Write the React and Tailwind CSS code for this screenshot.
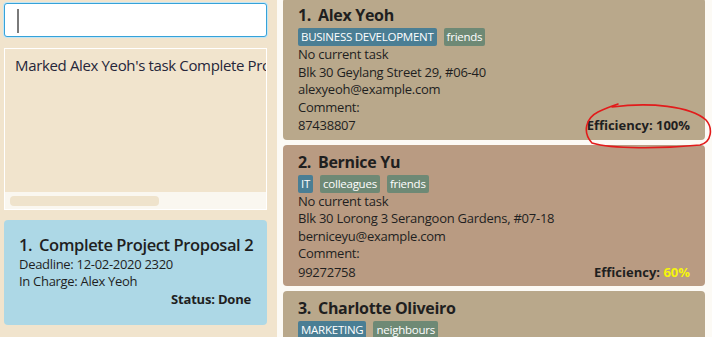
import React from "react";

const font = { fontFamily: '"Open Sans", "Noto Sans", sans-serif' };

function Tag({ children, kind }) {
  return (
    <span
      className={
        "inline-flex h-[18px] items-center rounded-[2px] px-[3px] text-[11.5px] leading-none tracking-[-0.25px] text-white " +
        (kind === "dept" ? "bg-[#4a7e94]" : "bg-[#6e8975]")
      }
    >
      {children}
    </span>
  );
}

function PersonCard({ idx, name, tags, address, email, phone, eff, effYellow, bg, extra }) {
  return (
    <div className={"shrink-0 rounded-[4px] pl-[15px] pr-[15px] pt-[6px] pb-[5px] text-[#1f1f1f] " + bg + " " + (extra || "")}>
      <div className="flex h-[22px] items-center whitespace-nowrap text-[16px] font-bold leading-[22px] tracking-[-0.3px]">
        <span className="w-[20px]">{idx}.</span>
        <span>{name}</span>
      </div>
      <div className="mt-[2px] flex gap-[7px] whitespace-nowrap">
        {tags.map((t) => (
          <Tag key={t.label} kind={t.kind}>
            {t.label}
          </Tag>
        ))}
      </div>
      <div className="whitespace-nowrap text-[13px] leading-[17.5px] tracking-[-0.25px]">
        <div>No current task</div>
        <div>{address}</div>
        <div>{email}</div>
        <div>Comment:</div>
        <div className="flex items-end justify-between">
          <span className="pt-[1px]">{phone}</span>
          <span className="pt-[1px] font-bold tracking-[0px]">
            Efficiency: <span className={effYellow ? "text-[#f5f50a]" : ""}>{eff}</span>
          </span>
        </div>
      </div>
    </div>
  );
}

export default function App() {
  return (
    <div className="relative flex h-[337px] w-[712px] overflow-hidden bg-[#fcfaf5]" style={font}>
      {/* Left panel */}
      <div className="flex w-[277px] shrink-0 flex-col bg-[#f1e4cd] pl-[4px] pr-[10px]">
        <div className="mt-[3px] h-[34px] rounded-[3px] border-[1.5px] border-[#36a2d8] bg-white p-[4px] shadow-[0_0_0_1px_#c4e6f5]">
          <div className="ml-[8px] mt-[1px] h-[24px] w-[2px] bg-[#7a7a7a]" />
        </div>
        <div className="mt-[11px] flex h-[162px] w-[263px] flex-col border border-white bg-[#f1e4cd]">
          <div className="flex-1 overflow-hidden whitespace-nowrap pl-[10px] pt-[6px] text-[15px] leading-[20px] tracking-[-0.35px] text-[#26263a]">
            Marked Alex Yeoh's task Complete Project Proposal 2 as Done
          </div>
          <div className="flex h-[17px] items-center bg-[#faf7f0] px-[5px]">
            <div className="h-[10px] w-[149px] rounded-[4px] bg-[#efe3cc]" />
          </div>
        </div>
        <div className="mt-[10px] h-[105px] w-[263px] rounded-[4px] bg-[#add8e6] pl-[15px] pr-[16px] pt-[14px] text-[#1f1f1f]">
          <div className="whitespace-nowrap text-[16.5px] font-semibold leading-[22px] tracking-[-0.4px]">
            <span className="inline-block w-[20px]">1.</span>Complete Project Proposal 2
          </div>
          <div className="whitespace-nowrap text-[13px] leading-[17px] tracking-[-0.3px]">Deadline: 12-02-2020 2320</div>
          <div className="whitespace-nowrap text-[13px] leading-[17px] tracking-[-0.3px]">In Charge: Alex Yeoh</div>
          <div className="mt-[1px] text-right text-[13px] font-bold leading-[17px] tracking-[-0.2px]">Status: Done</div>
        </div>
      </div>

      {/* Right panel */}
      <div className="flex flex-1 flex-col gap-[5px] pl-[6px] pr-[7px]">
        <PersonCard
          extra="-mt-[2px]"
          idx={1}
          name="Alex Yeoh"
          tags={[
            { label: "BUSINESS DEVELOPMENT", kind: "dept" },
            { label: "friends", kind: "tag" },
          ]}
          address="Blk 30 Geylang Street 29, #06-40"
          email="alexyeoh@example.com"
          phone="87438807"
          eff="100%"
          bg="bg-[#b9a88b]"
        />
        <PersonCard
          idx={2}
          name="Bernice Yu"
          tags={[
            { label: "IT", kind: "dept" },
            { label: "colleagues", kind: "tag" },
            { label: "friends", kind: "tag" },
          ]}
          address="Blk 30 Lorong 3 Serangoon Gardens, #07-18"
          email="berniceyu@example.com"
          phone="99272758"
          eff="60%"
          effYellow
          bg="bg-[#b99b82]"
        />
        <PersonCard
          idx={3}
          name="Charlotte Oliveiro"
          tags={[
            { label: "MARKETING", kind: "dept" },
            { label: "neighbours", kind: "tag" },
          ]}
          address="Blk 11 Ang Mo Kio Street 74, #11-04"
          email="charlotte@example.com"
          phone="93210283"
          eff="80%"
          bg="bg-[#b9a88b]"
        />
      </div>

      {/* Red annotation */}
      <svg className="pointer-events-none absolute left-0 top-0" width="712" height="337" viewBox="0 0 712 337">
        <path
          d="M618 104 C612 106 606 108 598 112 C586 118 582 132 592 143 C612 149 660 149 700 145 C712 142 713 128 706 120 C690 106 650 102 612 107"
          fill="none"
          stroke="#e21b1b"
          strokeWidth="1.6"
          strokeLinecap="round"
        />
      </svg>
    </div>
  );
}
